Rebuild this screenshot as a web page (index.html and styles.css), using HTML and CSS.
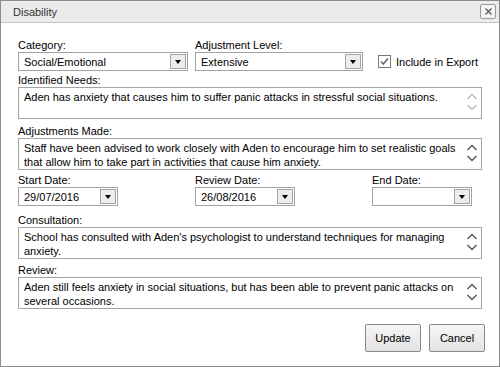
FILE: index.html
```html
<!DOCTYPE html>
<html>
<head>
<meta charset="utf-8">
<title>Disability</title>
<link rel="stylesheet" href="styles.css">
</head>
<body>
<div class="dialog">
  <div class="titlebar">
    <span class="title">Disability</span>
    <span class="close"><svg width="9" height="9" viewBox="0 0 9 9"><path d="M1.5 1.5L7.5 7.5M7.5 1.5L1.5 7.5" stroke="#555" stroke-width="1.2" fill="none"/></svg></span>
  </div>
  <div class="content">
    <div class="grid3">
      <div class="field">
        <div class="label">Category:</div>
        <div class="select sel-cat"><span class="val">Social/Emotional</span><span class="ddbtn"><span class="tri"></span></span></div>
      </div>
      <div class="field">
        <div class="label">Adjustment Level:</div>
        <div class="select sel-adj"><span class="val">Extensive</span><span class="ddbtn"><span class="tri"></span></span></div>
      </div>
      <div class="check-field">
        <span class="checkbox"><svg width="11" height="11" viewBox="0 0 11 11"><path d="M2 5.5L4.3 8L9 2.5" stroke="#666" stroke-width="1.5" fill="none"/></svg></span>
        <span class="check-label">Include in Export</span>
      </div>
    </div>

    <div class="field b-needs">
      <div class="label">Identified Needs:</div>
      <div class="ta"><div class="ta-text">Aden has anxiety that causes him to suffer panic attacks in stressful social situations.</div>
        <span class="scroll light"><svg width="12" height="20" viewBox="0 0 12 20"><path d="M1.5 7L6 2.5L10.5 7M1.5 13L6 17.5L10.5 13" stroke="currentColor" stroke-width="1.4" fill="none"/></svg></span></div>
    </div>

    <div class="field b-adj">
      <div class="label">Adjustments Made:</div>
      <div class="ta"><div class="ta-text">Staff have been advised to work closely with Aden to encourage him to set realistic goals that allow him to take part in activities that cause him anxiety.</div>
        <span class="scroll"><svg width="12" height="20" viewBox="0 0 12 20"><path d="M1.5 7L6 2.5L10.5 7M1.5 13L6 17.5L10.5 13" stroke="currentColor" stroke-width="1.4" fill="none"/></svg></span></div>
    </div>

    <div class="grid3 b-dates">
      <div class="field">
        <div class="label">Start Date:</div>
        <div class="select date"><span class="val">29/07/2016</span><span class="ddbtn"><span class="tri"></span></span></div>
      </div>
      <div class="field">
        <div class="label">Review Date:</div>
        <div class="select date"><span class="val">26/08/2016</span><span class="ddbtn"><span class="tri"></span></span></div>
      </div>
      <div class="field">
        <div class="label">End Date:</div>
        <div class="select date"><span class="val"></span><span class="ddbtn"><span class="tri"></span></span></div>
      </div>
    </div>

    <div class="field b-cons">
      <div class="label">Consultation:</div>
      <div class="ta"><div class="ta-text">School has consulted with Aden's psychologist to understand techniques for managing anxiety.</div>
        <span class="scroll"><svg width="12" height="20" viewBox="0 0 12 20"><path d="M1.5 7L6 2.5L10.5 7M1.5 13L6 17.5L10.5 13" stroke="currentColor" stroke-width="1.4" fill="none"/></svg></span></div>
    </div>

    <div class="field b-rev">
      <div class="label">Review:</div>
      <div class="ta"><div class="ta-text">Aden still feels anxiety in social situations, but has been able to prevent panic attacks on several occasions.</div>
        <span class="scroll"><svg width="12" height="20" viewBox="0 0 12 20"><path d="M1.5 7L6 2.5L10.5 7M1.5 13L6 17.5L10.5 13" stroke="currentColor" stroke-width="1.4" fill="none"/></svg></span></div>
    </div>

    <div class="buttons">
      <button class="btn">Update</button>
      <button class="btn">Cancel</button>
    </div>
  </div>
</div>
</body>
</html>
```

FILE: styles.css
```css
* { box-sizing: border-box; }
html, body { margin: 0; padding: 0; background: #fff; }
body {
  font-family: "Liberation Sans", Arial, sans-serif;
  font-size: 11px;
  color: #000;
}
.dialog {
  width: 500px;
  height: 367px;
  border: 1px solid #8c8c8c;
  background: #fff;
  display: flex;
  flex-direction: column;
}
.titlebar {
  height: 22px;
  flex: none;
  background: #ebebeb;
  border-bottom: 1px solid #c4c4c4;
  display: flex;
  align-items: center;
  justify-content: space-between;
  padding: 0 3px 0 12px;
}
.title { color: #333; }
.close {
  width: 16px;
  height: 15px;
  border: 1px solid #9a9a9a;
  border-radius: 2px;
  background: #f4f4f4;
  display: flex;
  align-items: center;
  justify-content: center;
}
.content {
  padding: 16px 17px 0 17px;
  display: flex;
  flex-direction: column;
}
.grid3 {
  display: grid;
  grid-template-columns: 177px 177px 1fr;
}
.b-needs { margin-top: 3px; }
.b-adj { margin-top: 6px; }
.b-dates { margin-top: 4px; }
.b-cons { margin-top: 8px; }
.b-rev { margin-top: 5px; }
.label {
  height: 13px;
  line-height: 13px;
}
.select {
  height: 19px;
  border: 1px solid #a3a3a3;
  background: #fff;
  display: flex;
  align-items: center;
  justify-content: space-between;
  padding: 0 1px 0 5px;
}
.sel-cat { width: 170px; }
.sel-adj { width: 168px; }
.date { width: 100px; }
.ddbtn {
  width: 16px;
  height: 15px;
  border: 1px solid #a3a3a3;
  background: #ececec;
  display: flex;
  align-items: center;
  justify-content: center;
}
.tri {
  width: 0;
  height: 0;
  border-left: 3.5px solid transparent;
  border-right: 3.5px solid transparent;
  border-top: 4px solid #000;
}
.check-field {
  display: flex;
  align-items: center;
  gap: 5px;
  padding: 13px 0 0 6px;
  height: 32px;
}
.checkbox {
  width: 13px;
  height: 13px;
  border: 1px solid #7a7a7a;
  background: #fff;
  display: flex;
  align-items: center;
  justify-content: center;
}
.ta {
  position: relative;
  height: 32px;
  border: 1px solid #a3a3a3;
  padding: 2px 24px 0 5px;
  line-height: 14px;
  overflow: hidden;
}
.scroll {
  position: absolute;
  right: 3px;
  top: 4px;
  color: #555;
  display: flex;
}
.scroll.light { color: #bcbcbc; }
.buttons {
  display: flex;
  justify-content: flex-end;
  gap: 8px;
  margin: 15px -3px 0 0;
}
.btn {
  font-family: "Liberation Sans", Arial, sans-serif;
  font-size: 11px;
  color: #000;
  width: 56px;
  height: 28px;
  border: 1px solid #8a8a8a;
  border-radius: 2px;
  background: linear-gradient(#f6f6f6, #e2e2e2);
  padding: 0;
}
```
